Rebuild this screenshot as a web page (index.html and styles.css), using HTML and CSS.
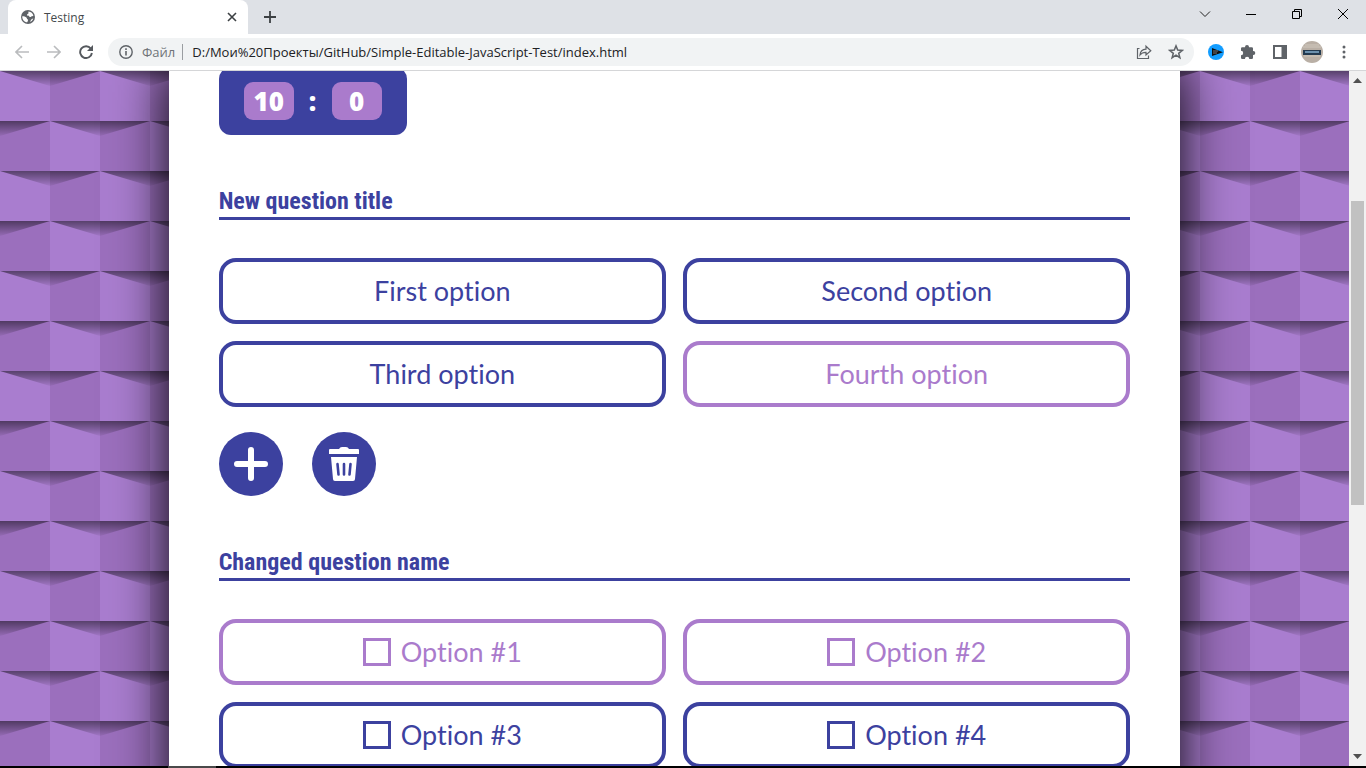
FILE: index.html
```html
<!DOCTYPE html>
<html lang="en">
<head>
<meta charset="utf-8">
<title>Testing</title>
<link rel="stylesheet" href="styles.css">
</head>
<body>
<div class="browser">
  <header class="tabs">
    <div class="tab">
      <svg class="globe" viewBox="0 0 14 14"><circle cx="7" cy="7" r="7" fill="#5f6368"/><path d="M1.300 6.200C3 6.200 4.500 6.600 5.400 7.500c.8.8.2 1.400 1.200 1.800.8.3.5 1.600-.4 3C3.300 12 1 9.400 1.300 6.200zM7.600 1.500c2.300.2 4.500 2 4.800 4.300-.8.8-1.800.1-2.300.9-.6.8-1.900.3-2.100-.6-.2-.8-1.600-.3-2-1.100-.3-.7 1-.9 1.400-1.400.4-.6-.4-1.300.2-2.100zM12.300 8.500c-.5 1.500-1.500 2.700-3 3.400.1-1.200.6-2.900 3-3.400z" fill="#fff"/></svg>
      <span class="tab-title">Testing</span>
      <button class="icon-btn tab-close" aria-label="Close tab"><svg width="10" height="10" viewBox="0 0 10 10" stroke="#3c4043" stroke-width="1.600"><path d="M1 1l8 8M9 1L1 9"/></svg></button>
    </div>
    <button class="icon-btn new-tab" aria-label="New tab"><svg width="12" height="12" viewBox="0 0 12 12" stroke="#3c4043" stroke-width="1.800"><path d="M6 0v12M0 6h12"/></svg></button>
    <div class="window-controls">
      <button class="icon-btn" aria-label="Search tabs"><svg width="12" height="12" viewBox="0 0 12 12" fill="none" stroke="#222"><path d="M1 3.500l5 5 5-5"/></svg></button>
      <button class="icon-btn" aria-label="Minimize"><svg width="10" height="10" viewBox="0 0 10 10" stroke="#000"><path d="M0 5.500h10"/></svg></button>
      <button class="icon-btn" aria-label="Restore"><svg width="10" height="10" viewBox="0 0 10 10" fill="none" stroke="#000"><path d="M.5 2.500h7v7h-7zM2.500 2.500v-2h7v7h-2"/></svg></button>
      <button class="icon-btn" aria-label="Close"><svg width="10" height="10" viewBox="0 0 10 10" stroke="#000"><path d="M0 0l10 10M10 0L0 10"/></svg></button>
    </div>
  </header>
  <div class="toolbar">
    <nav class="nav">
      <button class="icon-btn" aria-label="Back"><svg width="14" height="14" viewBox="0 0 14 14" fill="none" stroke="#babcbe" stroke-width="1.600"><path d="M14 7H1.200M7 1L1 7l6 6"/></svg></button>
      <button class="icon-btn" aria-label="Forward"><svg width="14" height="14" viewBox="0 0 14 14" fill="none" stroke="#babcbe" stroke-width="1.600"><path d="M0 7h12.800M7 1l6 6-6 6"/></svg></button>
      <button class="icon-btn" aria-label="Reload"><svg width="14" height="14" viewBox="0 0 14 14" fill="none" stroke="#55595e" stroke-width="1.900"><path d="M11.800 3.600A5.900 5.900 0 1 0 12.900 8"/><path d="M14 0v6H8z" fill="#55595e" stroke="none"/></svg></button>
    </nav>
    <div class="omnibox">
      <svg width="14" height="14" viewBox="0 0 14 14" fill="none" stroke="#5f6368" stroke-width="1.400"><circle cx="7" cy="7" r="6.200"/><path d="M7 6v4.500M7 3.300v1.600" stroke-width="1.600"/></svg>
      <label class="scheme" for="url">Файл</label>
      <input class="url" id="url" type="text" value="D:/Мои%20Проекты/GitHub/Simple-Editable-JavaScript-Test/index.html">
      <button class="icon-btn" aria-label="Share"><svg width="16" height="16" viewBox="0 0 16 16" fill="none" stroke="#5f6368" stroke-width="1.200"><path d="M3.500 4.500H1.500v10h11v-3M4 11c.3-3.800 2.600-5.800 6-5.900V2.200L14.800 6.800 10 11V8.300C7.300 8.200 5.500 9 4 11z"/></svg></button>
      <button class="icon-btn" aria-label="Bookmark"><svg width="16" height="16" viewBox="0 0 16 16" fill="none" stroke="#5f6368" stroke-width="1.500"><path d="M8 1.900l1.700 4.200 4.500.3-3.500 2.900 1.200 4.400L8 11.200l-3.900 2.500 1.200-4.400L1.800 6.400l4.500-.3z"/></svg></button>
    </div>
    <div class="extensions">
      <button class="icon-btn" aria-label="Player"><svg width="16" height="16" viewBox="0 0 16 16"><circle cx="8" cy="8" r="8" fill="#139dff"/><path d="M4 4l11 4.200L4 12z" fill="#111"/><path d="M5 7h5M5 9h4" stroke="#777"/></svg></button>
      <button class="icon-btn" aria-label="Extensions"><svg width="16" height="16" viewBox="0 0 16 16" fill="#5f6368"><path d="M1 4.500q0-1.200 1.200-1.200H5V3a2 2 0 0 1 4 0v.3h2.800q1.200 0 1.200 1.200V7h.3a2 2 0 0 1 0 4H13v2.800q0 1.200-1.200 1.200H9.300a2.200 2.200 0 0 0-4.400 0H2.200Q1 15 1 13.800v-2.600a2.200 2.200 0 0 0 0-4.400z"/></svg></button>
      <button class="icon-btn" aria-label="Side panel"><svg width="14" height="14" viewBox="0 0 14 14"><path d="M1 1h12v12H1z" fill="#fff" stroke="#5f6368" stroke-width="2"/><path d="M8.500 1H13v12H8.500z" fill="#5f6368"/></svg></button>
      <button class="icon-btn" aria-label="Profile"><svg width="22" height="22" viewBox="0 0 22 22"><circle cx="11" cy="11" r="11" fill="#b9afa5"/><path d="M4 4h14M2 6h18" stroke="#d0c8bd"/><path d="M2 9h18v5H2z" fill="#233a50"/><path d="M4 11h14" stroke="#6c91ae" stroke-width="2"/><path d="M3 15h16" stroke="#d2c9bd"/></svg></button>
      <button class="icon-btn" aria-label="Menu"><svg width="4" height="14" viewBox="0 0 4 14" fill="#5f6368"><circle cx="2" cy="2" r="1.500"/><circle cx="2" cy="7" r="1.500"/><circle cx="2" cy="12" r="1.500"/></svg></button>
    </div>
  </div>
  <div class="viewport">
    <div class="page">
      <svg class="pattern" aria-hidden="true">
        <defs>
          <linearGradient id="shade" gradientUnits="userSpaceOnUse" x1="0" y1="0" x2="0" y2="15"><stop offset="0" stop-color="#000" stop-opacity=".48"/><stop offset="1" stop-color="#000" stop-opacity=".04"/></linearGradient>
          <pattern id="bricks" width="100" height="100" patternUnits="userSpaceOnUse">
            <path d="M0 0h100v100H0z" fill="#a97dcf"/>
            <path d="M50 0h50v50H50zM0 50h50v50H0z" fill="#9b6fbd"/>
            <path d="M0 0h100L50 15z" fill="url(#shade)"/>
            <path d="M-50 0H50L0 15zM50 0h100l-50 15z" transform="translate(0 50)" fill="url(#shade)"/>
          </pattern>
        </defs>
        <rect width="100%" height="100%" fill="url(#bricks)"/>
      </svg>
      <main class="sheet">
        <div class="timer"><span class="digits">10</span><span class="colon">:</span><span class="digits">0</span></div>
        <section class="question">
          <h2 class="title">New question title</h2>
          <div class="options">
            <button class="option">First option</button>
            <button class="option">Second option</button>
            <button class="option">Third option</button>
            <button class="option picked">Fourth option</button>
          </div>
          <div class="actions">
            <button class="round" aria-label="Add option"><svg viewBox="0 0 64 64"><path d="M32 18v28M18 32h28" stroke="#fff" stroke-width="6" stroke-linecap="round"/></svg></button>
            <button class="round" aria-label="Delete question"><svg viewBox="0 0 64 64"><path d="M18 17h9q1-2 3-2h4q2 0 3 2h9q1 0 1 1v4H17v-4q0-1 1-1z" fill="#fff"/><path d="M19 25h26l-2 22q0 2-2 2H23q-2 0-2-2z" fill="#fff"/><path d="M25.500 32l1 10.500M32 32v10.500M38.500 32l-1 10.500" stroke="#3c419f" stroke-width="2.600" stroke-linecap="round"/></svg></button>
          </div>
        </section>
        <section class="question">
          <h2 class="title">Changed question name</h2>
          <div class="options">
            <label class="option picked"><input class="check" type="checkbox">Option #1</label>
            <label class="option picked"><input class="check" type="checkbox">Option #2</label>
            <label class="option"><input class="check" type="checkbox">Option #3</label>
            <label class="option"><input class="check" type="checkbox">Option #4</label>
          </div>
        </section>
      </main>
    </div>
    <div class="scrollbar">
      <svg width="9" height="5" viewBox="0 0 9 5"><path d="M0 5l4.500-5L9 5z" fill="#505050"/></svg>
      <div class="track"><div class="thumb"></div></div>
      <svg width="9" height="5" viewBox="0 0 9 5"><path d="M0 0h9L4.500 5z" fill="#505050"/></svg>
    </div>
  </div>
  <div class="taskbar"><div class="running"></div></div>
</div>
</body>
</html>
```
FILE: styles.css
```css
:root {
  --blue: #3c419f;
  --violet: #aa7bcc;
}
* { box-sizing: border-box; }
body {
  margin: 0;
  font-family: "Open Sans", sans-serif;
  background: #fff;
}
button { font: inherit; cursor: pointer; }
svg { display: block; flex: none; }
.browser {
  display: flex;
  flex-direction: column;
  height: 100vh;
  overflow: hidden;
}
.icon-btn {
  display: flex;
  align-items: center;
  justify-content: center;
  flex: none;
  padding: 0;
  border: 0;
  background: none;
}

/* Tab strip */
.tabs {
  display: flex;
  height: 34px;
  flex: none;
  padding-left: 8px;
  background: #dee1e6;
}
.tab {
  display: flex;
  align-items: center;
  width: 240px;
  padding: 0 11px 0 13px;
  border-radius: 8px 8px 0 0;
  background: #fff;
}
.globe { width: 14px; height: 14px; }
.tab-title {
  flex: 1;
  padding-left: 9px;
  font-size: 12px;
  color: #45494d;
}
.new-tab { width: 44px; }
.window-controls {
  display: flex;
  height: 28px;
  margin-left: auto;
}
.window-controls .icon-btn { width: 46px; }

/* Toolbar */
.toolbar {
  display: flex;
  align-items: center;
  height: 37px;
  flex: none;
  border-bottom: 1px solid #d5d6d8;
}
.nav {
  display: flex;
  gap: 18px;
  padding: 0 15px;
}
.omnibox {
  display: flex;
  flex: 1;
  align-items: center;
  height: 28px;
  padding: 0 10px 0 11px;
  border-radius: 14px;
  background: #f1f3f4;
}
.omnibox .icon-btn { margin-left: 16px; }
.scheme {
  margin: 0 9px;
  padding-right: 7px;
  border-right: 1px solid #9a9da1;
  line-height: 16px;
  font-size: 13px;
  color: #6f7378;
}
.url {
  flex: 1;
  min-width: 0;
  padding: 0;
  border: 0;
  outline: 0;
  background: none;
  font: 13px "Open Sans", sans-serif;
  color: #202124;
}
.extensions {
  display: flex;
  align-items: center;
  gap: 10px;
  padding: 0 11px;
}
.extensions .icon-btn { width: 22px; }

/* Page */
.viewport {
  display: flex;
  flex: 1;
  min-height: 0;
}
.page {
  position: relative;
  flex: 1;
  min-width: 0;
  overflow: hidden;
}
.pattern {
  position: absolute;
  inset: 0;
  width: 100%;
  height: 100%;
}
.sheet {
  position: relative;
  width: 75%;
  margin: -4px auto 0;
  padding: 0 50px 50px;
  background: #fff;
  box-shadow: 0 0 50px #000;
  color: var(--blue);
  font-family: Lato, sans-serif;
  font-variant-ligatures: none;
}
.timer {
  display: inline-flex;
  align-items: center;
  padding: 15px 25px;
  border-radius: 12px;
  background: var(--blue);
  color: #fff;
  font-family: "Open Sans", sans-serif;
  font-size: 26px;
  font-weight: 800;
  line-height: 38px;
  text-align: center;
  vertical-align: top;
}
.digits {
  width: 50px;
  border-radius: 9px;
  background: var(--violet);
}
.colon { width: 38px; }
.question { padding-top: 50px; }
.title {
  margin: 0 0 38px;
  border-bottom: 3px solid var(--blue);
  font: bold 24px/32px "Roboto Condensed", "Liberation Sans Narrow", sans-serif;
}
.options {
  display: grid;
  grid-template-columns: 1fr 1fr;
  gap: 17px;
}
.option {
  display: flex;
  align-items: center;
  justify-content: center;
  gap: 10px;
  height: 66px;
  padding: 0;
  border: 4px solid;
  border-radius: 17px;
  background: #fff;
  color: var(--blue);
  font-size: 27px;
  line-height: 40px;
}
.option.picked { color: var(--violet); }
.check {
  appearance: none;
  width: 28px;
  height: 28px;
  margin: 0;
  border: 3px solid;
  color: inherit;
}
.actions {
  display: flex;
  gap: 29px;
  padding-top: 25px;
}
.round {
  width: 64px;
  height: 64px;
  padding: 0;
  border: 0;
  border-radius: 50%;
  background: var(--blue);
}

/* Scrollbar */
.scrollbar {
  display: flex;
  flex-direction: column;
  align-items: center;
  width: 17px;
  padding: 7px 0;
  background: #f1f1f1;
}
.track {
  flex: 1;
  width: 13px;
  padding-top: 118px;
}
.thumb {
  height: 55%;
  background: #c1c1c1;
}
.taskbar {
  height: 2px;
  flex: none;
  padding-left: 168px;
  background: #000;
}
.running {
  width: 48px;
  height: 2px;
  background: #4a4a4a;
}
```
